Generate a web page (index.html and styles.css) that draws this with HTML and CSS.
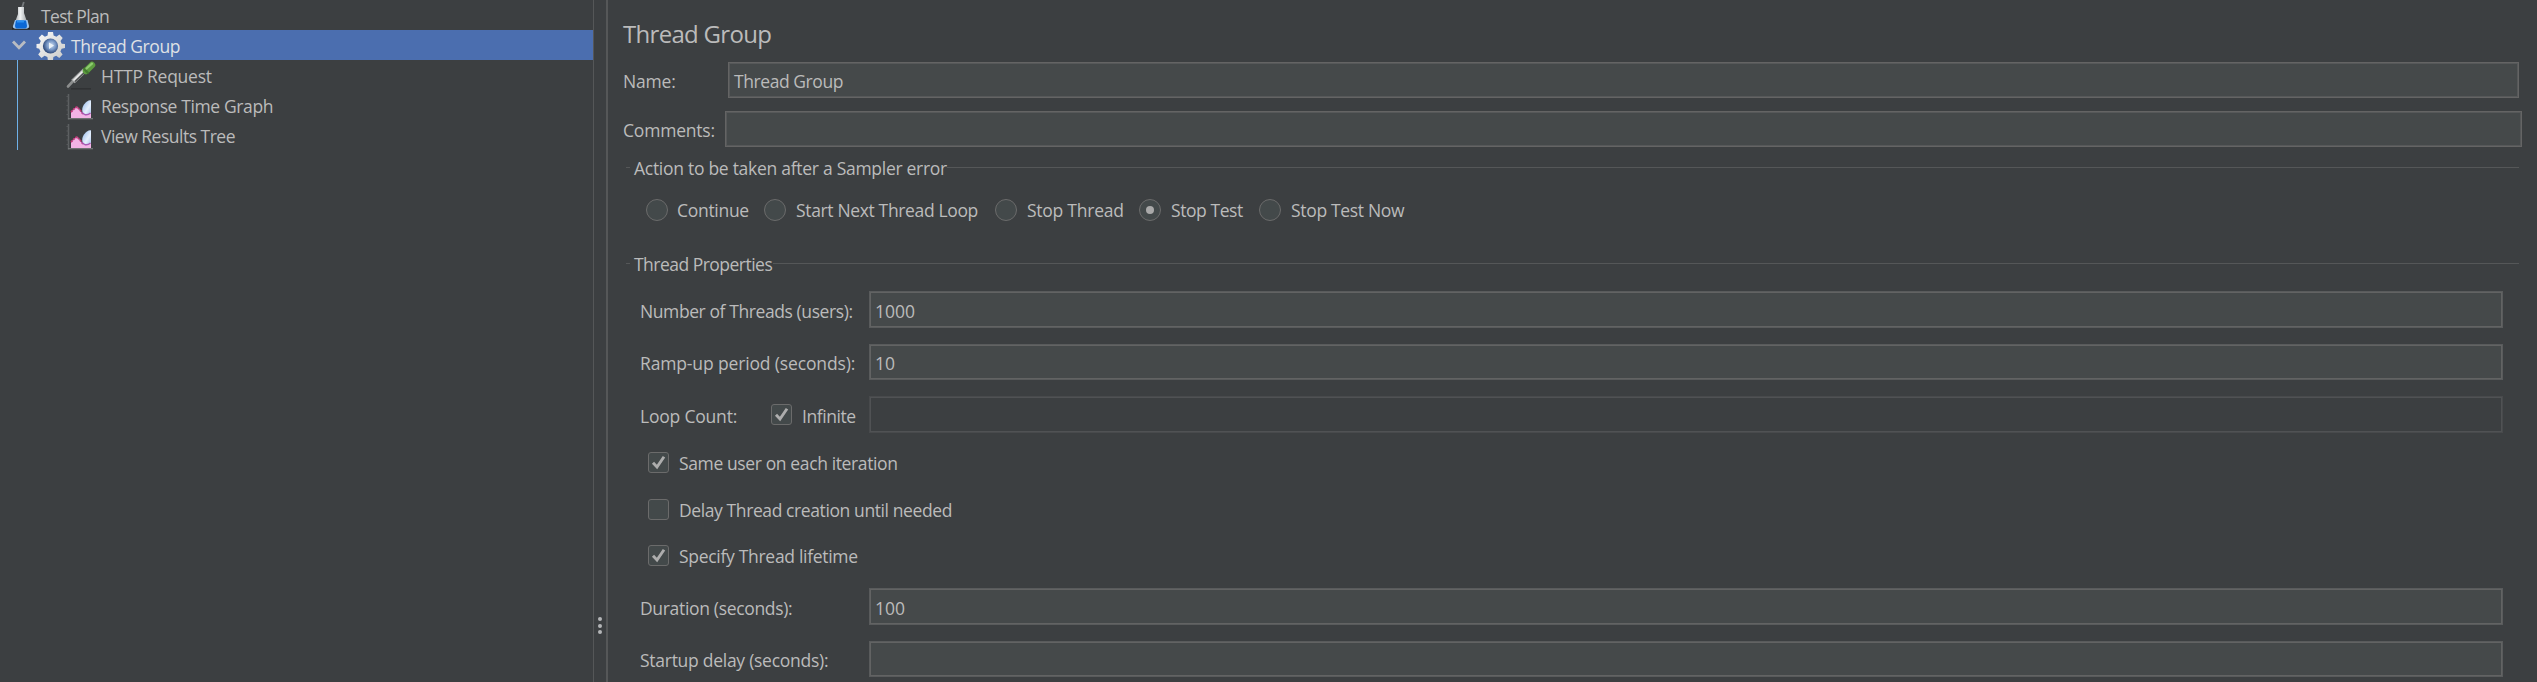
FILE: index.html
```
<!DOCTYPE html>
<html lang="en">
<head>
<meta charset="utf-8">
<title>Thread Group</title>
<link rel="stylesheet" href="styles.css">
</head>
<body>
<svg class="defs" width="0" height="0" aria-hidden="true">
  <defs>
    <linearGradient id="glass" x1="0" x2="1" y1="0" y2="0"><stop offset="0" stop-color="#8b9196"/><stop offset=".45" stop-color="#f1f3f4"/><stop offset="1" stop-color="#8e9498"/></linearGradient>
    <linearGradient id="blob" x1="0" x2="1" y1="0" y2="1"><stop offset="0" stop-color="#8fb8ee"/><stop offset=".6" stop-color="#e6f0fd"/><stop offset="1" stop-color="#a9c4ec"/></linearGradient>
    <radialGradient id="lens" cx=".55" cy=".45" r=".6"><stop offset="0" stop-color="#c9dbf0"/><stop offset=".5" stop-color="#7695c4"/><stop offset="1" stop-color="#1d3768"/></radialGradient>
    <linearGradient id="metal" x1="0" x2="1" y1="0" y2="1"><stop offset="0" stop-color="#fafafa"/><stop offset="1" stop-color="#c9c9c7"/></linearGradient>
    <symbol id="graph" viewBox="0 0 28 26">
      <path d="M2.500 0V25.500" stroke="#5d6062" stroke-width="1.500"/>
      <path d="M.5 2.500h2M.5 7h2M.5 11.500h2M.5 16h2M.5 20.500h2" stroke="#56595b"/>
      <path d="M2 24.700H27" stroke="#77797b" stroke-width="1.200"/>
      <path d="M5 24V18L9 14l2-1 3 3 3 4 4-1 4-3V24z" fill="#f3b4e6"/>
      <path d="M5 18L9 14l2-1 3 3 3 4" fill="none" stroke="#c4377b" stroke-width="1.800" stroke-dasharray="2 1"/>
      <path d="M25 6.500v12c-2 3.500-7 2.500-8.500-.5-1-4 1-8 4.500-10.500 1.500-1 3-1.500 4-1z" fill="url(#blob)"/>
      <path d="M16 18c1 3 5 4 8.500 1" fill="none" stroke="#a95ab5" stroke-width="1.500"/>
    </symbol>
    <symbol id="tick" viewBox="0 0 21 21">
      <path d="M5 10.800L9 15L16 4.800" fill="none" stroke="#adadad" stroke-width="2.900"/>
    </symbol>
  </defs>
</svg>
<div class="app">
  <nav class="tree">
    <div class="node plan">
      <svg class="icon" width="20" height="30" viewBox="0 0 20 30">
        <path d="M1 28.500h18" stroke="#242628" stroke-width="2"/>
        <path d="M11 8l1.800-6" stroke="#777b7e" stroke-width="1.800"/>
        <path d="M7 7h6v6l4.500 13q.5 2.500-2 2.500h-11q-2.500 0-2-2.500L7 14z" fill="url(#glass)"/>
        <path d="M4 20h12.500l1.500 6q.3 2-2 2.500H4Q1.500 28 2 26z" fill="#9cc4ef"/>
        <path d="M5 20.500h10l1 5q0 3-2 3H6q-2 0-2-3z" fill="#0b68d6"/>
        <path d="M6 21.500h7" stroke="#2b91f2" stroke-width="2"/>
      </svg>
      <span class="t t-plan">Test Plan</span>
    </div>
    <div class="node group">
      <svg class="chev" width="16" height="12" viewBox="0 0 16 12"><path d="M2 2.500L8 8.700L14 2.500" fill="none" stroke="#b9bcc2" stroke-width="2.800"/></svg>
      <svg class="icon" width="29" height="28" viewBox="0 0 28 28">
        <path d="M11.500 0h5l.6 3.600 2.800 1.200 3-2.200 3.300 3.300-2.200 3 1.200 2.800 3.300.4v4l-3.400.6-1.200 2.800 2.200 3.100-3.300 3.300-3.100-2.200-2.800 1.200-.5 3.600h-5l-.5-3.600-2.800-1.200-3.100 2.200-3.300-3.300 2.200-3.100-1.200-2.800L0 16.100v-4l3.100-.4 1.200-2.800-2.200-3 3.300-3.300 3 2.200 2.700-1.200z" fill="url(#metal)"/>
        <circle cx="14" cy="14" r="7.600" fill="url(#lens)"/>
        <path d="M12.500 10.500l5 3-5 3.500z" fill="#eaf1f8"/>
      </svg>
      <span class="t t-group">Thread Group</span>
    </div>
    <div class="children">
      <div class="node leaf">
        <svg class="icon" width="31" height="30" viewBox="0 0 31 30">
          <path d="M5 28.800h20" stroke="#303234" stroke-width="1.500"/>
          <path d="M2 26.500L8 20" stroke="#8b8d8d" stroke-width="2.600" stroke-linecap="round"/>
          <path d="M7 21.500L19 10" stroke="#a5a7a7" stroke-width="5"/>
          <path d="M7.500 20.500L18.500 9.500" stroke="#eceded" stroke-width="1.700"/>
          <path d="M9 21.500L19.500 11.500" stroke="#4b4d4e" stroke-width="1.200"/>
          <path d="M20 11L26 5" stroke="#5c9c3f" stroke-width="6.500" stroke-linecap="round"/>
          <path d="M17.500 8l5 5.500" stroke="#447b2f" stroke-width="2.500"/>
          <path d="M20.500 8.500L26 3.700" stroke="#8fcb6f" stroke-width="2.200" stroke-linecap="round"/>
        </svg>
        <span class="t t-http">HTTP Request</span>
      </div>
      <div class="node leaf">
        <svg class="icon chart" width="28" height="26"><use href="#graph"/></svg>
        <span class="t t-resp">Response Time Graph</span>
      </div>
      <div class="node leaf">
        <svg class="icon chart" width="28" height="26"><use href="#graph"/></svg>
        <span class="t t-view">View Results Tree</span>
      </div>
    </div>
  </nav>
  <div class="divider"><i></i><i></i><i></i></div>
  <main class="panel">
    <h1 class="title">Thread Group</h1>
    <div class="row name"><label class="t t-name">Name:</label><div class="field"><span class="t t-group">Thread Group</span></div></div>
    <div class="row comments"><label class="t t-comments">Comments:</label><div class="field"></div></div>

    <section class="action">
      <div class="legend"><span class="t t-action">Action to be taken after a Sampler error</span></div>
      <div class="radios">
        <label class="radio"><i class="dot"></i><span class="t t-continue">Continue</span></label>
        <label class="radio"><i class="dot"></i><span class="t t-next">Start Next Thread Loop</span></label>
        <label class="radio"><i class="dot"></i><span class="t t-thread">Stop Thread</span></label>
        <label class="radio"><i class="dot on"></i><span class="t t-test">Stop Test</span></label>
        <label class="radio"><i class="dot"></i><span class="t t-now">Stop Test Now</span></label>
      </div>
    </section>

    <section class="props">
      <div class="legend"><span class="t t-props">Thread Properties</span></div>
      <div class="row prop tall threads"><label class="t t-users">Number of Threads (users):</label><div class="field"><span class="t">1000</span></div></div>
      <div class="row prop ramp"><label class="t t-ramp">Ramp-up period (seconds):</label><div class="field"><span class="t">10</span></div></div>
      <div class="row prop tall loop">
        <div class="loop-label"><label class="t t-loop">Loop Count:</label><span class="box"><svg width="21" height="21"><use href="#tick"/></svg></span><span class="t t-inf">Infinite</span></div>
        <div class="field disabled"></div>
      </div>
      <div class="checks">
        <label class="check"><span class="box"><svg width="21" height="21"><use href="#tick"/></svg></span><span class="t t-same">Same user on each iteration</span></label>
        <label class="check"><span class="box"></span><span class="t t-delay">Delay Thread creation until needed</span></label>
        <label class="check"><span class="box"><svg width="21" height="21"><use href="#tick"/></svg></span><span class="t t-life">Specify Thread lifetime</span></label>
      </div>
      <div class="row prop tall duration"><label class="t t-dur">Duration (seconds):</label><div class="field"><span class="t">100</span></div></div>
      <div class="row prop startup"><label class="t t-start">Startup delay (seconds):</label><div class="field"></div></div>
    </section>
  </main>
</div>
</body>
</html>
```
FILE: styles.css
```
* { box-sizing: border-box; }
body {
  margin: 0;
  background: #3c3f41;
  color: #bbbbbb;
  font-family: "Open Sans", "Noto Sans", sans-serif;
  font-size: 17.5px;
  line-height: 24px;
  overflow: hidden;
}
.defs { position: absolute; }
.app { display: flex; width: 2537px; height: 682px; }
.t { display: block; white-space: nowrap; }

/* tree */
.tree { width: 594px; flex: none; border-right: 1px solid #555758; }
.node { display: flex; align-items: center; height: 30px; }
.node .t { padding-top: 2px; }
.node svg { flex: none; display: block; }
.plan { padding-left: 11px; }
.plan .t { margin-left: 10px; }
.group { padding-left: 11px; background: #4b6eaf; color: #dfe1e5; }
.group .icon { margin: 2px 0 0 9px; }
.group .t { margin-left: 6px; }
.children { margin-left: 17px; border-left: 1px solid #6fb1e8; height: 90px; }
.leaf { padding-left: 48px; }
.leaf .chart { margin: 3px 3px 0 0; }
.leaf .t { margin-left: 4px; }

/* splitter */
.divider {
  width: 14px; flex: none;
  border-right: 2px solid #555758;
  display: flex; flex-direction: column; align-items: center;
  gap: 2.500px; padding-top: 617px;
}
.divider i { width: 4px; height: 4px; border-radius: 50%; background: #b4b6b7; }

/* form */
.panel { flex: 1; padding: 17px 0 0 15px; }
.title { margin: 0 0 11px; font-size: 24px; line-height: 34px; font-weight: 400; letter-spacing: -.7px; }
.row { display: flex; align-items: center; height: 36px; }
.row .t { padding-top: 2px; }
.row.tall { height: 37px; }
.field {
  flex: 1; height: 100%;
  display: flex; align-items: center;
  padding-left: 5px;
  background: #45494a;
  border: 1px solid #646464;
  box-shadow: inset 0 0 0 1px #565859;
}
.name { margin-right: 18px; }
.name label { width: 105px; }
.name .field { padding-left: 5px; }
.comments { margin: 13px 15px 0 0; }
.comments label { width: 102px; }

.legend { display: flex; margin-right: 18px; padding-left: 3px; }
.legend::before, .legend::after { content: ""; height: 1px; background: #555758; margin-top: 11px; }
.legend::before { width: 4px; margin-right: 4px; }
.legend::after { flex: 1; }
.action { margin-top: 9px; }
.radios { display: flex; align-items: center; height: 36px; margin-top: 12px; padding-left: 23px; }
.radio { display: flex; align-items: center; gap: 10px; }
.radio:nth-child(1) { width: 118px; gap: 9px; }
.radio:nth-child(2) { width: 231px; }
.radio:nth-child(3) { width: 144px; }
.radio:nth-child(4) { width: 120px; }
.dot {
  width: 22px; height: 22px; flex: none;
  border: 1.500px solid #6b6b6b; border-radius: 50%;
  background: #43494a;
  display: grid; place-items: center;
}
.dot.on::after { content: ""; width: 8px; height: 8px; border-radius: 50%; background: #a9a9a9; }

.props { margin-top: 24px; }
.props .legend .t { margin-right: 1px; }
.prop { margin: 16px 34px 0 17px; }
.prop > label, .loop-label { width: 229px; flex: none; }
.prop .field { border-color: #595b5c; box-shadow: inset 0 0 0 1px #626363; }
.prop .field.disabled { background: #3c3f41; border-color: #484a4c; box-shadow: inset 0 0 0 1px #505254; }
.threads { margin-top: 15px; }
.loop-label { display: flex; align-items: center; }
.loop-label label { width: 131px; }
.loop-label .box { margin-right: 10px; }
.box {
  width: 21px; height: 21px; flex: none;
  border: 1px solid #6b6b6b; border-radius: 3px;
  background: #43494a;
}
.box svg { display: block; margin: -1px; }
.checks { display: flex; flex-direction: column; gap: 22px; padding: 17px 0 0 25px; height: 139px; }
.check { display: flex; align-items: center; gap: 10px; height: 25px; }
.check .t { padding-top: 1px; }
.check:nth-child(3) { margin-top: -1px; }
.duration { margin-top: 16px; }

/* label tracking */
.t-plan { letter-spacing: -.65px; }
.t-group { letter-spacing: -.43px; }
.t-http { letter-spacing: -.25px; }
.t-resp { letter-spacing: -.38px; }
.t-view { letter-spacing: -.5px; }
.t-name { letter-spacing: -.2px; }
.t-comments { letter-spacing: -.2px; }
.t-action { letter-spacing: -.28px; }
.t-props { letter-spacing: -.52px; }
.t-continue { letter-spacing: -.29px; }
.t-next { letter-spacing: -.35px; }
.t-thread { letter-spacing: -.25px; }
.t-test { letter-spacing: -.43px; }
.t-now { letter-spacing: -.32px; }
.t-users { letter-spacing: -.41px; }
.t-ramp { letter-spacing: -.14px; }
.t-loop { letter-spacing: -.2px; }
.t-inf { letter-spacing: -.45px; }
.t-same { letter-spacing: -.38px; }
.t-delay { letter-spacing: -.4px; }
.t-life { letter-spacing: -.3px; }
.t-dur { letter-spacing: -.33px; }
.t-start { letter-spacing: -.27px; }
```
